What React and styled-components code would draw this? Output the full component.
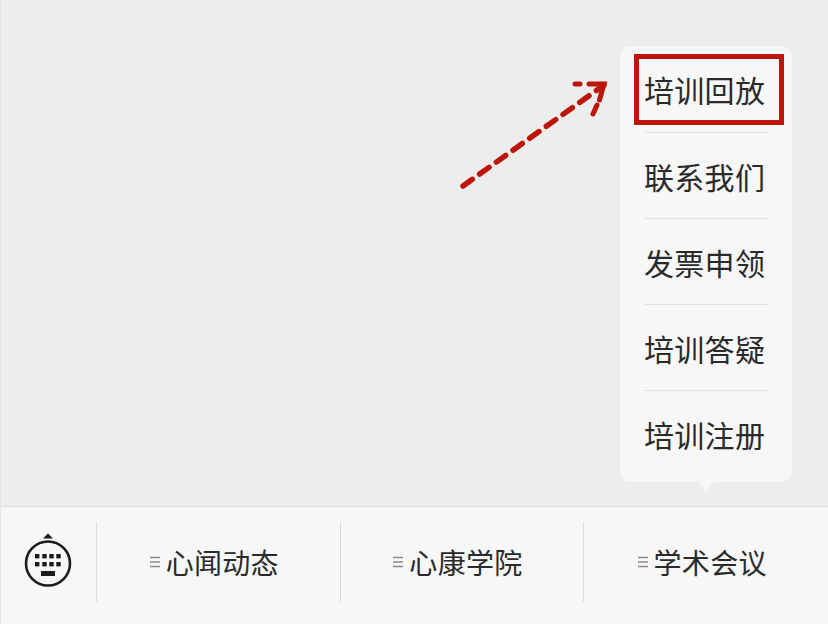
import styled, { createGlobalStyle } from "styled-components";

const GlobalStyle = createGlobalStyle`
html, body {
    margin: 0;
    padding: 0;
    background: #ededed;
}
* {
    box-sizing: border-box;
}
`

const Page = styled.div`
width: 828px;
height: 624px;
display: flex;
flex-direction: column;
overflow: hidden;
position: relative;
border-left: 1px solid #e4e4e4;
font-family: "Noto Sans CJK SC", "Noto Sans", sans-serif;
color: #2a2a2a;
`

const Content = styled.div`
height: 506px;
display: flex;
justify-content: flex-end;
align-items: flex-start;
padding: 46px 36px 0 0;
background: #ededed;
`

const Menu = styled.div`
width: 172px;
height: 436px;
background: #f7f7f7;
border-radius: 10px;
padding: 0 24px;
position: relative;
&::after {
    content: "";
    position: absolute;
    left: 79px;
    bottom: -11px;
    border-left: 7px solid transparent;
    border-right: 7px solid transparent;
    border-top: 11px solid #f7f7f7;
}
`

const MenuItem = styled.div`
height: 86px;
font-size: 30px;
line-height: 86px;
letter-spacing: 0.3px;
padding-right: 4px;
text-align: center;
white-space: nowrap;
border-top: ${({ $first }) => ($first ? "none" : "1px solid #e2e2e2")};
`

const Highlight = styled.div`
position: absolute;
left: 633px;
top: 54px;
width: 150px;
height: 71px;
border: 5px solid #bb1607;
`

const Arrow = styled.svg`
position: absolute;
left: 439px;
top: 60px;
`

const Footer = styled.div`
height: 118px;
display: flex;
align-items: center;
background: #f7f7f7;
border-top: 1px solid #dcdcdc;
`

const KeyboardCell = styled.div`
width: 96px;
height: 80px;
margin-top: -7px;
display: flex;
align-items: center;
justify-content: center;
border-right: 1px solid #d9d9d9;
`

const Tab = styled.div`
width: 244px;
height: 80px;
margin-top: -7px;
padding-right: 8px;
display: flex;
align-items: center;
justify-content: center;
gap: 6px;
font-size: 28px;
line-height: 78px;
letter-spacing: 0.3px;
white-space: nowrap;
border-right: ${({ $last }) => ($last ? "none" : "1px solid #d9d9d9")};
`

const KeyboardIcon = () => {
    const cols = [35, 42.3, 49.3, 56.3];
    const rows = [554, 562];
    return (
        <svg width="60" height="64" viewBox="18 530 60 64">
            <path d="M48 533.5L53 538.5H43Z" fill="#1c1c1c" />
            <circle cx="48" cy="563.5" r="22" fill="none" stroke="#1c1c1c" strokeWidth="2.6" />
            {rows.map((y) => cols.map((x) => <rect key={`${x}-${y}`} x={x} y={y} width="4.4" height="4.4" fill="#1c1c1c" />))}
            <rect x="41" y="571" width="14" height="5" fill="#1c1c1c" />
        </svg>
    )
}

const TabIcon = () => (
    <svg width="10" height="14" viewBox="0 0 10 14">
        <path d="M0 2.5H10M0 7H10M0 11.5H10" stroke="#8a8a8a" strokeWidth="1.4" fill="none" />
    </svg>
)

const menuItems = ["培训回放", "联系我们", "发票申领", "培训答疑", "培训注册"];
const tabs = ["心闻动态", "心康学院", "学术会议"];

const App = () => {
    return (
        <Page>
            <GlobalStyle />
            <Content>
                <Menu>
                    {menuItems.map((item, i) => (
                        <MenuItem key={item} $first={i === 0}>{item}</MenuItem>
                    ))}
                </Menu>
            </Content>
            <Footer>
                <KeyboardCell>
                    <KeyboardIcon />
                </KeyboardCell>
                {tabs.map((tab, i) => (
                    <Tab key={tab} $last={i === tabs.length - 1}>
                        <TabIcon />
                        {tab}
                    </Tab>
                ))}
            </Footer>
            <Highlight />
            <Arrow width="180" height="140" viewBox="440 60 180 140">
                <path d="M463 186L604 85" fill="none" stroke="#bb1607" strokeWidth="5.5" strokeLinecap="round" strokeDasharray="11.5 9" />
                <path d="M575 84H580M589 84H604L599.5 100M597 105L593 114" fill="none" stroke="#bb1607" strokeWidth="5" strokeLinecap="round" strokeLinejoin="miter" />
            </Arrow>
        </Page>
    )
}

export default App;
